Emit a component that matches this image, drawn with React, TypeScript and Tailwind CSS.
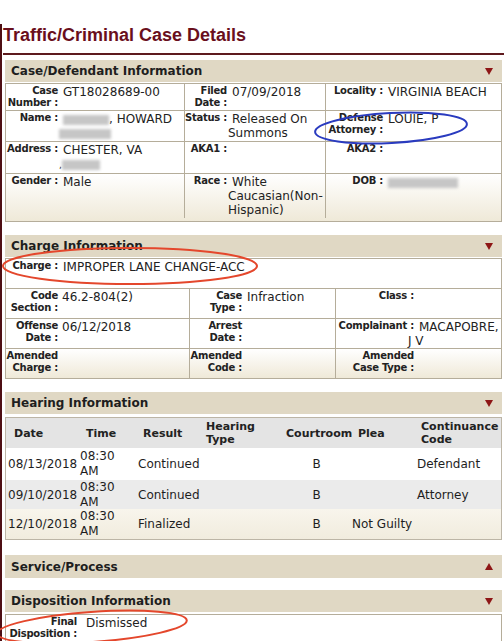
import React from "react";

type Node = React.ReactNode;

function Tri({ up }: { up?: boolean }) {
  return (
    <svg width="8" height="7" viewBox="0 0 8 7" className="shrink-0">
      <polygon points={up ? "4,0 8,7 0,7" : "0,0 8,0 4,7"} fill="#8e1616" />
    </svg>
  );
}

function Bar({ title, up, className = "" }: { title: string; up?: boolean; className?: string }) {
  return (
    <div
      className={`flex h-[22px] items-center justify-between bg-[#e0d8c4] pl-[6px] pr-[9px] text-[12px] font-bold text-[#1e1e1e] ${className}`}
    >
      <span>{title}</span>
      <Tri up={up} />
    </div>
  );
}

function Blur({ w }: { w: string }) {
  return <span className={`inline-block h-[10px] ${w} bg-[#c6c6c6] align-middle blur-[1.5px]`} />;
}

function Field({
  lw,
  label,
  value = [],
  vpl = "pl-[1px]",
}: {
  lw: string;
  label: string[];
  value?: Node[];
  vpl?: string;
}) {
  return (
    <div className="flex py-[1px]">
      <div
        className={`${lw} flex shrink-0 flex-col items-end text-[10px] font-bold leading-[12px] tracking-[-0.25px] whitespace-nowrap`}
      >
        {label.map((l) => (
          <span key={l}>{l}</span>
        ))}
      </div>
      <div className={`${vpl} text-[12px] leading-[14px] whitespace-nowrap`}>
        {value.map((v, i) => (
          <div key={i} className={i === 0 ? "pl-[4px]" : ""}>
            {v}
          </div>
        ))}
      </div>
    </div>
  );
}

function CaseTable() {
  const row = "grid grid-cols-[178px_141px_1fr]";
  const c = "border-l border-[#b5ad9a]";
  return (
    <div className="mt-[1px] border border-[#b5ad9a]">
      <div className={row}>
        <Field lw="w-[52px]" label={["Case", "Number :"]} value={["GT18028689-00"]} />
        <div className={c}>
          <Field lw="w-[42px]" label={["Filed", "Date :"]} value={["07/09/2018"]} />
        </div>
        <div className={c}>
          <Field lw="w-[57px]" label={["Locality :"]} value={["VIRGINIA BEACH"]} />
        </div>
      </div>
      <div className={`${row} border-t border-[#b5ad9a]`}>
        <Field
          lw="w-[52px]"
          label={["Name :"]}
          value={[
            <>
              <Blur w="w-[46px]" />, HOWARD
            </>,
            <Blur w="w-[52px]" />,
          ]}
        />
        <div className={c}>
          <Field lw="w-[42px]" label={["Status :"]} value={["Released On", "Summons"]} />
        </div>
        <div className={c}>
          <Field lw="w-[57px]" label={["Defense", "Attorney :"]} value={["LOUIE, P"]} />
        </div>
      </div>
      <div className={`${row} border-t border-[#b5ad9a]`}>
        <Field
          lw="w-[52px]"
          label={["Address :"]}
          value={[
            "CHESTER, VA",
            <>
              <span className="text-[9px]">,</span>
              <Blur w="w-[38px]" />
            </>,
          ]}
        />
        <div className={c}>
          <Field lw="w-[42px]" label={["AKA1 :"]} />
        </div>
        <div className={c}>
          <Field lw="w-[57px]" label={["AKA2 :"]} />
        </div>
      </div>
      <div className={`${row} border-t border-[#b5ad9a] bg-linear-to-b from-white to-[#efe9d8] pb-[3px]`}>
        <Field lw="w-[52px]" label={["Gender :"]} value={["Male"]} />
        <div className={c}>
          <Field lw="w-[42px]" label={["Race :"]} value={["White", "Caucasian(Non-", "Hispanic)"]} />
        </div>
        <div className={c}>
          <Field lw="w-[57px]" label={["DOB :"]} value={[<Blur w="w-[70px]" />]} />
        </div>
      </div>
    </div>
  );
}

function ChargeTable() {
  const row = "grid h-[30px] grid-cols-[183px_146px_1fr] border-t border-[#b5ad9a]";
  const c = "border-l border-[#b5ad9a]";
  return (
    <div className="mt-[1px] border border-[#b5ad9a]">
      <div className="h-[29px]">
        <Field lw="w-[52px]" label={["Charge :"]} value={["IMPROPER LANE CHANGE-ACC"]} />
      </div>
      <div className={row}>
        <Field lw="w-[52px]" label={["Code", "Section :"]} value={["46.2-804(2)"]} vpl="pl-0" />
        <div className={c}>
          <Field lw="w-[52px]" label={["Case", "Type :"]} value={["Infraction"]} />
        </div>
        <div className={c}>
          <Field lw="w-[78px]" label={["Class :"]} />
        </div>
      </div>
      <div className={row}>
        <Field lw="w-[52px]" label={["Offense", "Date :"]} value={["06/12/2018"]} vpl="pl-0" />
        <div className={c}>
          <Field lw="w-[52px]" label={["Arrest", "Date :"]} />
        </div>
        <div className={c}>
          <Field
            lw="w-[78px]"
            label={["Complainant :"]}
            value={["MACAPOBRE,", <span className="-ml-[7px]">J V</span>]}
          />
        </div>
      </div>
      <div className={`${row} bg-linear-to-b from-white to-[#efe9d8]`}>
        <Field lw="w-[52px]" label={["Amended", "Charge :"]} />
        <div className={c}>
          <Field lw="w-[52px]" label={["Amended", "Code :"]} />
        </div>
        <div className={c}>
          <Field lw="w-[78px]" label={["Amended", "Case Type :"]} />
        </div>
      </div>
    </div>
  );
}

const hearings = [
  { date: "08/13/2018", result: "Continued", plea: "", code: "Defendant", bg: "bg-white h-[32px]" },
  { date: "09/10/2018", result: "Continued", plea: "", code: "Attorney", bg: "bg-[#ebebeb] h-[29px]" },
  {
    date: "12/10/2018",
    result: "Finalized",
    plea: "Not Guilty",
    code: "",
    bg: "bg-linear-to-b from-[#f8f5ec] to-[#f1ecde] h-[30px]",
  },
];

function HearingTable() {
  const cols = "grid grid-cols-[74px_58px_68px_80px_66px_65px_1fr]";
  return (
    <div className="mt-[3px] border border-[#bcb5a6]">
      <div className={`${cols} h-[30px] items-center bg-[#e4e4e4] text-[11px] font-bold leading-[13px] text-[#222]`}>
        <div className="pl-[8px]">Date</div>
        <div className="pl-[6px]">Time</div>
        <div className="pl-[5px]">Result</div>
        <div>
          Hearing
          <br />
          Type
        </div>
        <div>Courtroom</div>
        <div className="pl-[6px]">Plea</div>
        <div className="pl-[4px]">
          Continuance
          <br />
          Code
        </div>
      </div>
      {hearings.map((h) => (
        <div key={h.date} className={`${cols} ${h.bg} items-center text-[12px] leading-[15px] text-[#1e1e1e]`}>
          <div className="pl-[2px]">{h.date}</div>
          <div>
            08:30
            <br />
            AM
          </div>
          <div>{h.result}</div>
          <div />
          <div className="pr-[5px] text-center">B</div>
          <div>{h.plea}</div>
          <div>{h.code}</div>
        </div>
      ))}
    </div>
  );
}

function Marks() {
  return (
    <svg className="pointer-events-none absolute left-0 top-0" width="504" height="641" viewBox="0 0 504 641">
      <ellipse
        cx="391"
        cy="128"
        rx="76"
        ry="15"
        transform="rotate(-3 391 128)"
        fill="none"
        stroke="#2a3bbf"
        strokeWidth="2"
      />
      <ellipse cx="130" cy="266" rx="127" ry="18" fill="none" stroke="#e4472c" strokeWidth="2" />
      <ellipse
        cx="92"
        cy="627"
        rx="95"
        ry="15"
        transform="rotate(-4 92 627)"
        fill="none"
        stroke="#e4472c"
        strokeWidth="2"
      />
    </svg>
  );
}

export default function App() {
  return (
    <div className="relative h-[641px] w-[504px] overflow-hidden bg-white font-['DejaVu_Sans',Verdana,sans-serif] text-[#222]">
      <div className="h-full border-l-2 border-[#4e0f14]">
        <h1 className="mt-[24px] pl-[1px] font-['Liberation_Sans',Arial,sans-serif] text-[18px] leading-[22px] font-bold text-[#6a0f1c]">
          Traffic/Criminal Case Details
        </h1>
        <div className="mt-[7px] ml-[1px] border-t-2 border-[#5e1a1e]" />
        <div className="mt-[5px] ml-[3px] mr-[2px]">
          <Bar title="Case/Defendant Information" />
          <CaseTable />
          <Bar title="Charge Information" className="mt-[13px]" />
          <ChargeTable />
          <Bar title="Hearing Information" className="mt-[13px]" />
          <HearingTable />
          <Bar title="Service/Process" up className="mt-[15px] h-[23px]" />
          <Bar title="Disposition Information" className="mt-[12px]" />
          <div className="mt-[2px] border border-[#b5ad9a]">
            <Field lw="w-[71px]" label={["Final", "Disposition :"]} value={["Dismissed"]} vpl="pl-[5px]" />
            <div className="h-[20px]" />
          </div>
        </div>
      </div>
      <Marks />
    </div>
  );
}
